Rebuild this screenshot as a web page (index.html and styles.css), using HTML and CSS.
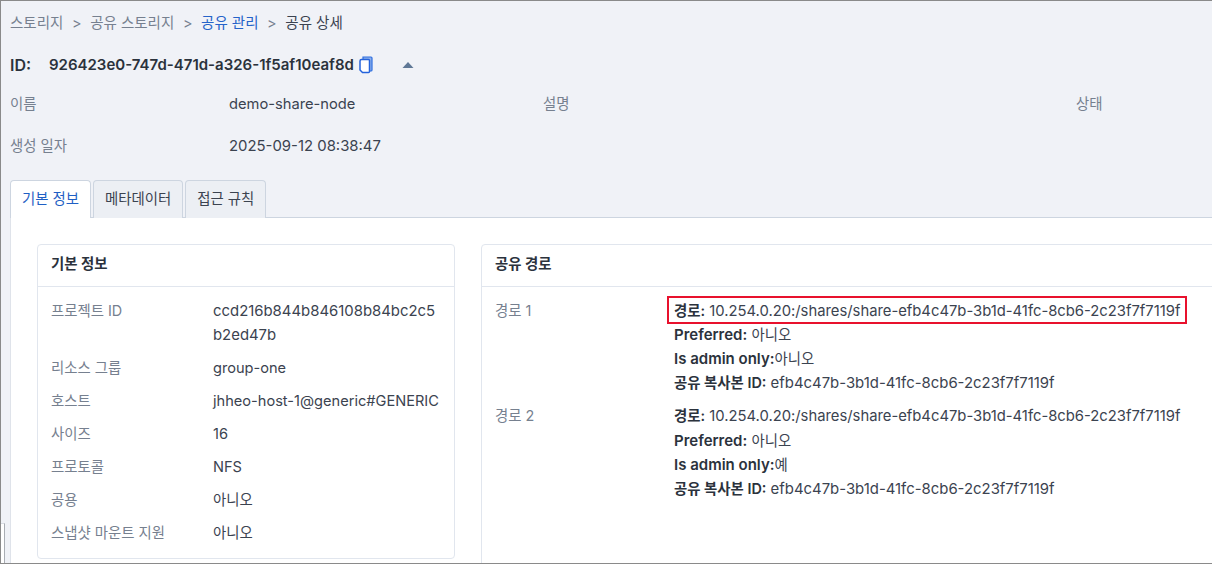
FILE: index.html
```html
<!DOCTYPE html>
<html lang="en">
<head>
    <meta charset="UTF-8">
    <meta name="viewport" content="width=device-width, initial-scale=1.0">
    <title>공유 상세</title>
    <link rel="stylesheet" href="styles.css">
</head>
<body>
    <div class="page">
        <nav class="breadcrumb">
            <span>스토리지</span>
            <span class="sep">&gt;</span>
            <span>공유 스토리지</span>
            <span class="sep">&gt;</span>
            <span class="link">공유 관리</span>
            <span class="sep">&gt;</span>
            <span class="current">공유 상세</span>
        </nav>

        <div class="id-row">
            <span class="id-label">ID:</span>
            <span class="id-value">926423e0-747d-471d-a326-1f5af10eaf8d</span>
            <svg class="copy-icon" width="14" height="18" viewBox="0 0 14 18">
                <path d="M4 1h8a1 1 0 0 1 1 1v12a1 1 0 0 1-1 1H4z" fill="#8fb0ea" stroke="#2f6fe0" stroke-width="1.2"/>
                <path d="M2.5 3.5h7a1 1 0 0 1 1 1v11a1 1 0 0 1-1 1H3.5l-2.5-2.5V5a1.5 1.5 0 0 1 1.5-1.5z" fill="#fff" stroke="#2463dc" stroke-width="1.5"/>
            </svg>
            <svg class="caret-icon" width="12" height="6" viewBox="0 0 12 6">
                <path d="M6 0l5.5 6H.5z" fill="#5f7896"/>
            </svg>
        </div>

        <div class="summary">
            <span class="key">이름</span>
            <span class="val">demo-share-node</span>
            <span class="key">설명</span>
            <span class="key">상태</span>
            <span class="key">생성 일자</span>
            <span class="val digits">2025-09-12 08:38:47</span>
        </div>

        <div class="tabs">
            <div class="tab active">기본 정보</div>
            <div class="tab">메타데이터</div>
            <div class="tab">접근 규칙</div>
        </div>

        <div class="tab-panel">
            <section class="card card-info">
                <h2 class="card-title">기본 정보</h2>
                <div class="card-body">
                    <div class="info-row"><span class="key">프로젝트 ID</span><span class="val digits break">ccd216b844b846108b84bc2c5b2ed47b</span></div>
                    <div class="info-row"><span class="key">리소스 그룹</span><span class="val">group-one</span></div>
                    <div class="info-row"><span class="key">호스트</span><span class="val">jhheo-host-1@generic#GENERIC</span></div>
                    <div class="info-row"><span class="key">사이즈</span><span class="val">16</span></div>
                    <div class="info-row"><span class="key">프로토콜</span><span class="val">NFS</span></div>
                    <div class="info-row"><span class="key">공용</span><span class="val ko">아니오</span></div>
                    <div class="info-row"><span class="key">스냅샷 마운트 지원</span><span class="val ko">아니오</span></div>
                </div>
            </section>

            <section class="card card-path">
                <h2 class="card-title">공유 경로</h2>
                <div class="card-body">
                    <div class="path-row">
                        <span class="key">경로 1</span>
                        <div class="val">
                            <div class="line marked"><b class="ko">경로:</b> 10.254.0.20:/shares/share-efb4c47b-3b1d-41fc-8cb6-2c23f7f7119f</div>
                            <div class="line"><b>Preferred:</b> <span class="ko">아니오</span></div>
                            <div class="line"><b>Is admin only:</b><span class="ko">아니오</span></div>
                            <div class="line digits"><b class="ko">공유 복사본 ID:</b> efb4c47b-3b1d-41fc-8cb6-2c23f7f7119f</div>
                        </div>
                    </div>
                    <div class="path-row">
                        <span class="key">경로 2</span>
                        <div class="val">
                            <div class="line"><b class="ko">경로:</b> 10.254.0.20:/shares/share-efb4c47b-3b1d-41fc-8cb6-2c23f7f7119f</div>
                            <div class="line"><b>Preferred:</b> <span class="ko">아니오</span></div>
                            <div class="line"><b>Is admin only:</b><span class="ko">예</span></div>
                            <div class="line digits"><b class="ko">공유 복사본 ID:</b> efb4c47b-3b1d-41fc-8cb6-2c23f7f7119f</div>
                        </div>
                    </div>
                </div>
            </section>
        </div>

        <div class="corner"></div>
    </div>
</body>
</html>
```

FILE: styles.css
```css
html, body {
    margin: 0;
    padding: 0;
    height: 100%;
    overflow: hidden;
}

body {
    font-family: Inter, "Noto Sans CJK KR", sans-serif;
    font-size: 14.7px;
    line-height: 24px;
    color: #3b4350;
}

.page {
    position: relative;
    box-sizing: border-box;
    height: 564px;
    overflow: hidden;
    background: #f0f2f7;
    border: 1px solid #8a8a8a;
    border-right: none;
    padding-left: 9px;
}

.corner {
    position: absolute;
    left: 0;
    bottom: 0;
    width: 3px;
    height: 39px;
    background: #fff;
    border-top: 1px solid #d8dce3;
    border-right: 1px solid #a9adb3;
}

.breadcrumb {
    display: flex;
    gap: 8.6px;
    padding-top: 10px;
    font-size: 14.5px;
    color: #76808f;
}

.breadcrumb .link {
    color: #2563c9;
}

.breadcrumb .current {
    color: #3b4350;
}

.id-row {
    display: flex;
    align-items: center;
    margin-top: 18px;
    font-size: 15px;
    font-weight: 600;
    color: #2b323c;
}

.id-label {
    width: 39px;
    font-size: 16px;
}

.copy-icon {
    margin-left: 5px;
}

.caret-icon {
    margin-left: 29px;
}

.summary {
    display: grid;
    grid-template-columns: 219px 314px 533px 100px;
    row-gap: 18px;
    margin-top: 15px;
}

.key {
    font-size: 14.4px;
    color: #76808f;
}

.val {
    color: #3b4350;
}

.digits {
    font-size: 14.9px;
}

.ko {
    font-size: 14.4px;
}

.tabs {
    display: flex;
    gap: 2px;
    margin-top: 22px;
    height: 38px;
    font-size: 14.4px;
}

.tab {
    box-sizing: border-box;
    padding: 6px 11px 0;
    height: 38px;
    border: 1px solid #cdd5e0;
    border-bottom: none;
    border-radius: 4px 4px 0 0;
    background: #eceff4;
    color: #3b4350;
}

.tab.active {
    background: #fff;
    color: #1f5fc4;
    position: relative;
    z-index: 1;
}

.tab-panel {
    display: flex;
    gap: 26px;
    align-items: flex-start;
    margin-top: -1px;
    padding: 26px 0 0 26px;
    height: 400px;
    background: #fff;
    border-top: 1px solid #cdd5e0;
    border-left: 1px solid #dfe3ea;
}

.card {
    box-sizing: border-box;
    flex: none;
    border: 1px solid #e1e6ee;
    border-radius: 4px;
    background: #fff;
}

.card-info {
    width: 418px;
    height: 315px;
}

.card-path {
    width: 760px;
    height: 340px;
}

.card-title {
    margin: 0;
    padding: 7px 13px 10px;
    border-bottom: 1px solid #e1e6ee;
    font-size: 14.4px;
    font-weight: 600;
    color: #2b323c;
}

.card-body {
    padding: 12px 13px 0;
}

.info-row {
    display: grid;
    grid-template-columns: 162px 228px;
    margin-bottom: 9px;
    font-size: 14.6px;
}

.break {
    word-break: break-all;
}

.path-row {
    display: grid;
    grid-template-columns: 179px 1fr;
    margin-bottom: 9px;
    font-size: 14.8px;
}

.path-row + .path-row .line:first-child {
    margin-bottom: 1px;
}

.line {
    white-space: nowrap;
}

.line b {
    font-size: 15px;
    font-weight: 600;
    color: #2b323c;
}

.line b.ko {
    font-size: 14.4px;
}

.marked {
    position: relative;
    width: 506px;
}

.marked::after {
    content: "";
    position: absolute;
    inset: -3px -7px -1px -7px;
    border: 2px solid #e8112d;
}
```
